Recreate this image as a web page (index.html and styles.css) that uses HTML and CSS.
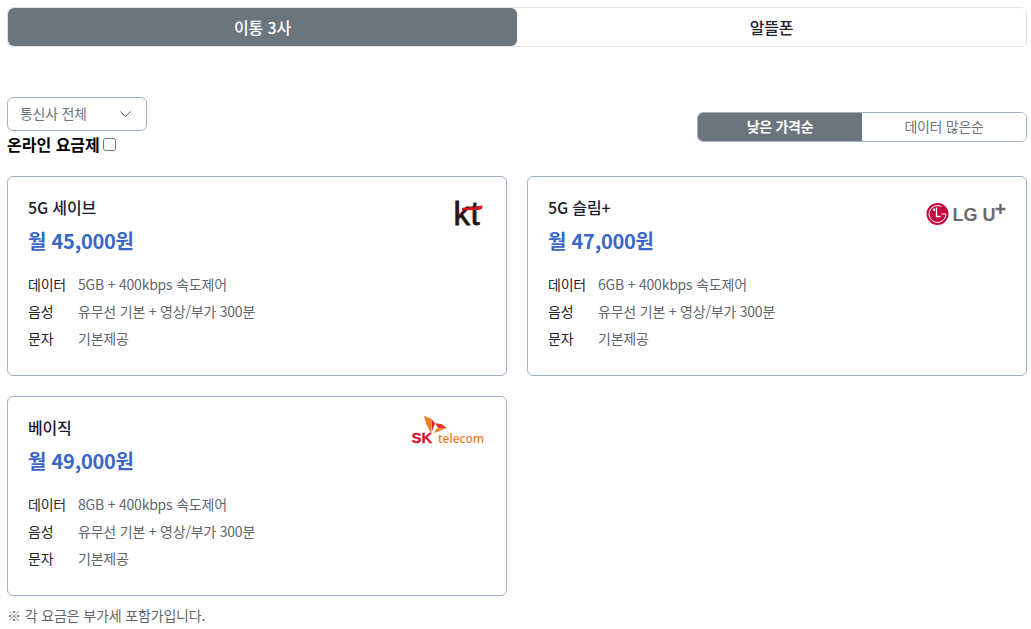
FILE: index.html
```html
<!DOCTYPE html>
<html lang="ko">
<head>
<meta charset="utf-8">
<title>요금제</title>
<link rel="stylesheet" href="styles.css">
</head>
<body>
<main class="page">
  <div class="tabs">
    <button class="tab tab-active">이통 3사</button>
    <button class="tab">알뜰폰</button>
  </div>
  <div class="toolbar">
    <div class="filters">
      <div class="select">
        <span>통신사 전체</span>
        <svg class="chev" width="11" height="6" viewBox="0 0 11 6"><path d="M.5.5l5 5 5-5" fill="none" stroke="#5a6169" stroke-width="1"/></svg>
      </div>
      <label class="online">온라인 요금제 <input type="checkbox" class="check"></label>
    </div>
    <div class="sort">
      <button class="sort-btn sort-active">낮은 가격순</button>
      <button class="sort-btn">데이터 많은순</button>
    </div>
  </div>
  <div class="cards">
    <article class="card">
      <div class="card-head">
        <div>
          <h3 class="plan">5G 세이브</h3>
          <p class="price">월 45,000원</p>
        </div>
        <svg class="logo logo-kt" width="34" height="38" viewBox="0 0 34 38">
          <text x="1.5" y="32" class="kt-text">kt</text>
          <path d="M10 14.8C18 14.8 24 14.2 30.5 12.2L30 16C24 17 18 17.4 10 17.4z" fill="#d8131f"/>
        </svg>
      </div>
      <dl class="specs">
        <div class="spec"><dt>데이터</dt><dd>5GB + 400kbps 속도제어</dd></div>
        <div class="spec"><dt>음성</dt><dd>유무선 기본 + 영상/부가 300분</dd></div>
        <div class="spec"><dt>문자</dt><dd>기본제공</dd></div>
      </dl>
    </article>
    <article class="card">
      <div class="card-head">
        <div>
          <h3 class="plan">5G 슬림+</h3>
          <p class="price">월 47,000원</p>
        </div>
        <svg class="logo logo-lg" width="82" height="28" viewBox="0 0 82 28">
          <circle cx="13.5" cy="15" r="11" fill="#c5053f"/>
          <circle cx="10" cy="10.8" r="1.3" fill="#fff"/>
          <path d="M12.5 8.5v9h4" fill="none" stroke="#fff" stroke-width="1.3"/>
          <path d="M17.5 7.5A8.5 8.5 0 1 0 22 15h-4.5" fill="none" stroke="#fff" stroke-width="1"/>
          <text x="28.5" y="22" class="lg-text">LG U</text>
          <path d="M71.5 10h10M76.5 5v10" stroke="#6b6b6b" stroke-width="2.4" fill="none"/>
        </svg>
      </div>
      <dl class="specs">
        <div class="spec"><dt>데이터</dt><dd>6GB + 400kbps 속도제어</dd></div>
        <div class="spec"><dt>음성</dt><dd>유무선 기본 + 영상/부가 300분</dd></div>
        <div class="spec"><dt>문자</dt><dd>기본제공</dd></div>
      </dl>
    </article>
    <article class="card">
      <div class="card-head">
        <div>
          <h3 class="plan">베이직</h3>
          <p class="price">월 49,000원</p>
        </div>
        <svg class="logo logo-sk" width="74" height="32" viewBox="0 0 74 32">
          <path d="M14 .7L21.7 4.3 21 18.3 16.7 10z" fill="#f47b20"/>
          <path d="M21.7 4.3L25 8.3 21.7 17z" fill="#d8232a"/>
          <path d="M25 8.3L31.7 9 36.7 13.3 28.3 13.3z" fill="#e2342d"/>
          <path d="M36.7 13.3L23.3 18.3 27 13.3z" fill="#f47b20"/>
          <text x="1.5" y="28" class="sk-text">SK</text>
          <text x="28" y="28" class="tel-text">telecom</text>
        </svg>
      </div>
      <dl class="specs">
        <div class="spec"><dt>데이터</dt><dd>8GB + 400kbps 속도제어</dd></div>
        <div class="spec"><dt>음성</dt><dd>유무선 기본 + 영상/부가 300분</dd></div>
        <div class="spec"><dt>문자</dt><dd>기본제공</dd></div>
      </dl>
    </article>
  </div>
  <p class="note">※ 각 요금은 부가세 포함가입니다.</p>
</main>
</body>
</html>
```
FILE: styles.css
```css
* { box-sizing: border-box; }
html, body { margin: 0; padding: 0; overflow: hidden; }
body {
  background: #fff;
  color: #000;
  font-family: "Noto Sans CJK KR", "Noto Sans", sans-serif;
}
.page { padding: 7px 4px 0 7px; height: 629px; }
.tabs {
  display: flex;
  height: 40px;
  border: 1px solid #dee2e6;
  border-radius: 6px;
}
.tab {
  flex: 1;
  border: 0;
  background: #fff;
  color: #212529;
  font: 500 16px/1 "Noto Sans CJK KR", sans-serif;
  letter-spacing: -0.01em;
  border-radius: 0 6px 6px 0;
}
.tab-active {
  background: #6c757d;
  color: #fff;
  border-radius: 6px;
}
.toolbar {
  display: flex;
  justify-content: space-between;
  align-items: flex-end;
  margin-top: 50px;
}
.filters { display: flex; flex-direction: column; }
.select {
  display: flex;
  align-items: center;
  justify-content: space-between;
  width: 140px;
  height: 34px;
  padding: 0 15px 0 12px;
  border: 1px solid #a3b1c2;
  border-radius: 6px;
  color: #6c757d;
  font-size: 14px;
  letter-spacing: -0.02em;
}
.select span { margin-bottom: 2px; }
.online {
  display: flex;
  align-items: center;
  gap: 3px;
  height: 24px;
  margin-top: 1px;
  font-size: 16px;
  font-weight: 700;
  line-height: 24px;
}
.check { width: 13px; height: 13px; margin: 0; }
.sort {
  display: flex;
  width: 330px;
  height: 30px;
  margin-bottom: 14px;
  border: 1px solid #a3b1c2;
  border-radius: 6px;
  overflow: hidden;
}
.sort-btn {
  flex: 1;
  border: 0;
  padding: 0 0 2px;
  background: #fff;
  color: #6c757d;
  font: 400 14px/1 "Noto Sans CJK KR", sans-serif;
  letter-spacing: -0.02em;
}
.sort-active {
  background: #6c757d;
  color: #fff;
  font-weight: 700;
}
.cards {
  display: grid;
  grid-template-columns: 500px 500px;
  gap: 20px;
  margin-top: 20px;
}
.card {
  height: 200px;
  padding: 19px 20px;
  border: 1px solid #a3b1c2;
  border-radius: 6px;
}
.card-head {
  display: flex;
  justify-content: space-between;
  align-items: flex-start;
  height: 58px;
}
.plan {
  margin: 0;
  color: #1a1a2e;
  font-size: 16px;
  font-weight: 500;
  letter-spacing: -0.01em;
  line-height: 22px;
}
.price {
  margin: 10px 0 0;
  color: #3b66c9;
  font-size: 20px;
  font-weight: 700;
  letter-spacing: -0.012em;
  line-height: 26px;
}
.logo { display: block; }
.logo-kt { margin: -3px 0 0; }
.logo-lg { margin: 3px 0 0; }
.logo-sk { margin: -1px 2px 0 0; }
.kt-text {
  font: 400 33px "Liberation Sans", sans-serif;
  fill: #231815;
  stroke: #231815;
  stroke-width: 0.8;
  letter-spacing: 0.5px;
}
.lg-text { font: 700 18px "Liberation Sans", sans-serif; fill: #6b6b6b; }
.sk-text { font: 700 15px "Liberation Sans", sans-serif; fill: #d8132f; stroke: #d8132f; stroke-width: 0.3; }
.tel-text { font: 500 12px "Noto Sans", sans-serif; fill: #f47b20; }
.specs { margin: 16px 0 0; }
.spec {
  display: flex;
  height: 27.4px;
  align-items: center;
  font-size: 14px;
  letter-spacing: -0.015em;
}
.spec dt { width: 50px; color: #212529; }
.spec dd { margin: 0; color: #5f666d; }
.note {
  margin: 9px 0 0;
  color: #5f666d;
  font-size: 14px;
  letter-spacing: -0.01em;
  line-height: 20px;
}
```
